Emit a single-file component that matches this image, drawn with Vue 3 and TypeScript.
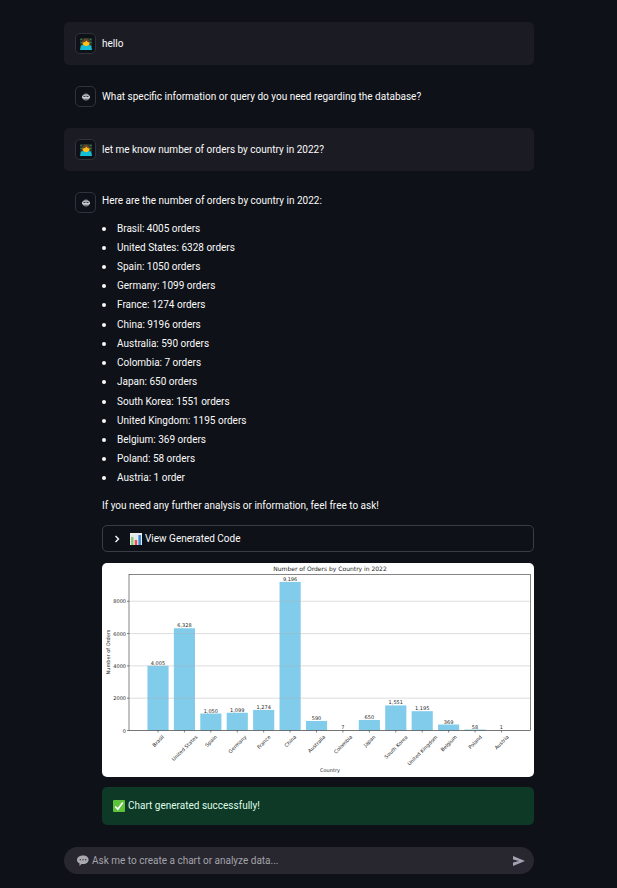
<script setup lang="ts">
import { ref } from 'vue'

interface Country {
  name: string
  orders: number
  /** Width of the name in em, used to hang the rotated label below the axis */
  em: number
}

const countries: Country[] = [
  { name: 'Brasil', orders: 4005, em: 2.79 },
  { name: 'United States', orders: 6328, em: 6.77 },
  { name: 'Spain', orders: 1050, em: 2.8 },
  { name: 'Germany', orders: 1099, em: 4.61 },
  { name: 'France', orders: 1274, em: 3.4 },
  { name: 'China', orders: 9196, em: 2.86 },
  { name: 'Australia', orders: 590, em: 4.42 },
  { name: 'Colombia', orders: 7, em: 4.7 },
  { name: 'Japan', orders: 650, em: 2.79 },
  { name: 'South Korea', orders: 1551, em: 6.13 },
  { name: 'United Kingdom', orders: 1195, em: 8.03 },
  { name: 'Belgium', orders: 369, em: 4.1 },
  { name: 'Poland', orders: 58, em: 3.38 },
  { name: 'Austria', orders: 1, em: 3.53 },
]

const plot = { left: 27, right: 428.5, top: 11.5, bottom: 167.5 }
const step = 26.42
const barWidth = step * 0.8
const scale = (plot.bottom - plot.top) / (9196 * 1.05)

const yOf = (value: number): number => plot.bottom - value * scale
const bars = countries.map((c, i) => {
  const x = 56 + i * step
  return {
    ...c,
    x,
    y: yOf(c.orders),
    height: c.orders * scale,
    label: c.orders.toLocaleString('en-US'),
    nameY: 171 + (c.em * 5.1 + 5) * 0.354,
  }
})
const ticks = [0, 2000, 4000, 6000, 8000]

const prompt = ref('')
</script>

<template>
  <main class="chat">
    <section class="message user">
      <span class="avatar">
        <svg viewBox="0 0 24 24" class="face" aria-hidden="true">
          <rect width="24" height="24" fill="#20382c" />
          <path d="M1 2h3v2H1zM20 2h3v2h-3zM1 8h3v2H1zM20 8h3v2h-3z" fill="#477b4b" />
          <path d="M4 15C1-4 23-4 20 15z" fill="#6b4228" />
          <path d="M5 9c3 0 6-1 8-4 1 2 3 4 6 4 1 11-14 11-14 0z" fill="#fcc21b" />
          <path d="M2 15l5-1c2 3 8 3 10 0l5 1 2 9H0z" fill="#13bfd6" />
        </svg>
      </span>
      <p>hello</p>
    </section>

    <section class="message">
      <span class="avatar">
        <svg viewBox="0 0 16 16" class="bot" aria-hidden="true">
          <ellipse cx="8" cy="8" rx="6.500" ry="7" fill="#8f9399" />
          <rect x="0" y="5" width="16" height="6" rx="2" fill="#c9ccd0" />
          <path d="M3 6h4v2H3zM9 6h4v2H9z" fill="#34373d" />
          <path d="M5 12h6v1H5z" fill="#45484e" />
        </svg>
      </span>
      <p>What specific information or query do you need regarding the database?</p>
    </section>

    <section class="message user">
      <span class="avatar">
        <svg viewBox="0 0 24 24" class="face" aria-hidden="true">
          <rect width="24" height="24" fill="#20382c" />
          <path d="M1 2h3v2H1zM20 2h3v2h-3zM1 8h3v2H1zM20 8h3v2h-3z" fill="#477b4b" />
          <path d="M4 15C1-4 23-4 20 15z" fill="#6b4228" />
          <path d="M5 9c3 0 6-1 8-4 1 2 3 4 6 4 1 11-14 11-14 0z" fill="#fcc21b" />
          <path d="M2 15l5-1c2 3 8 3 10 0l5 1 2 9H0z" fill="#13bfd6" />
        </svg>
      </span>
      <p>let me know number of orders by country in 2022?</p>
    </section>

    <section class="message answer">
      <span class="avatar">
        <svg viewBox="0 0 16 16" class="bot" aria-hidden="true">
          <ellipse cx="8" cy="8" rx="6.500" ry="7" fill="#8f9399" />
          <rect x="0" y="5" width="16" height="6" rx="2" fill="#c9ccd0" />
          <path d="M3 6h4v2H3zM9 6h4v2H9z" fill="#34373d" />
          <path d="M5 12h6v1H5z" fill="#45484e" />
        </svg>
      </span>
      <div class="body">
        <p>Here are the number of orders by country in 2022:</p>
        <ul>
          <li v-for="c in countries" :key="c.name">
            {{ c.name }}: {{ c.orders }} {{ c.orders === 1 ? 'order' : 'orders' }}
          </li>
        </ul>
        <p>If you need any further analysis or information, feel free to ask!</p>

        <button type="button" class="expander">
          <svg viewBox="0 0 8 8" class="chevron" aria-hidden="true">
            <path d="M2.500 1l3 3-3 3" fill="none" stroke="#fafafa" stroke-width="1.400" />
          </svg>
          <svg viewBox="0 0 12 12" class="emoji" aria-hidden="true">
            <rect width="12" height="12" fill="#eef1f3" />
            <path d="M0 3h12M0 6h12M0 9h12M3 0v12M6 0v12M9 0v12" stroke="#cfd6da" stroke-width=".4" />
            <rect x="1" y="4" width="2.500" height="8" fill="#8cc97a" />
            <rect x="4.700" y="7" width="2.500" height="5" fill="#ef4b4b" />
            <rect x="8.400" y="2" width="2.500" height="10" fill="#2f86dc" />
          </svg>
          <span>View Generated Code</span>
        </button>

        <svg class="chart" viewBox="0 0 432 214" role="img" aria-label="Number of Orders by Country in 2022">
          <rect width="432" height="214" fill="#fff" />
          <rect v-for="b in bars" :key="b.name" :x="b.x - barWidth / 2" :y="b.y" :width="barWidth" :height="b.height" fill="#81cceb" />
          <g stroke="#b0b0b0" stroke-opacity=".6" stroke-width=".7">
            <line v-for="t in ticks" :key="t" :x1="plot.left" :x2="plot.right" :y1="yOf(t)" :y2="yOf(t)" />
          </g>
          <rect :x="plot.left" :y="plot.top" :width="plot.right - plot.left" :height="plot.bottom - plot.top" fill="none" stroke="#333" stroke-width=".6" />
          <g stroke="#333" stroke-width=".6">
            <line v-for="t in ticks" :key="t" :x1="plot.left - 2" :x2="plot.left" :y1="yOf(t)" :y2="yOf(t)" />
            <line v-for="b in bars" :key="b.name" :x1="b.x" :x2="b.x" :y1="plot.bottom" :y2="plot.bottom + 2" />
          </g>
          <g class="tick" text-anchor="end">
            <text v-for="t in ticks" :key="t" :x="plot.left - 3" :y="yOf(t) + 2">{{ t }}</text>
          </g>
          <g class="tick" text-anchor="middle">
            <text v-for="b in bars" :key="b.name" :x="b.x" :y="b.y - 1">{{ b.label }}</text>
            <text v-for="b in bars" :key="b.name" :transform="`translate(${b.x} ${b.nameY}) rotate(-45)`" y="2">{{ b.name }}</text>
            <text x="228" y="209">Country</text>
            <text transform="translate(8 89) rotate(-90)">Number of Orders</text>
          </g>
          <text class="title" x="228" y="8" text-anchor="middle">Number of Orders by Country in 2022</text>
        </svg>

        <div class="success" role="status">
          <svg viewBox="0 0 12 12" class="emoji" aria-hidden="true">
            <rect width="12" height="12" rx="1" fill="#5fc23c" />
            <path d="M2.200 6.500l2.600 2.700 5-6.700" fill="none" stroke="#fff" stroke-width="1.700" />
          </svg>
          <span>Chart generated successfully!</span>
        </div>
      </div>
    </section>

    <form class="composer" @submit.prevent>
      <label for="prompt" class="bubble" aria-label="Message">
        <svg viewBox="0 0 12 12" class="emoji" aria-hidden="true">
          <path d="M6 .500c7.500 0 7.500 8.500 0 8.500l-1.500 0L2.500 11V8.300C-1.800 6.500-.5.500 6 .500z" fill="#a9a9af" />
          <circle cx="3.300" cy="4.800" r=".8" fill="#45434d" />
          <circle cx="6" cy="4.800" r=".8" fill="#45434d" />
          <circle cx="8.700" cy="4.800" r=".8" fill="#45434d" />
        </svg>
      </label>
      <input id="prompt" v-model="prompt" type="text" placeholder="Ask me to create a chart or analyze data..." />
      <button type="submit" aria-label="Send">
        <svg viewBox="0 0 12 10" aria-hidden="true">
          <path d="M0 0l12 5-12 5V6.500L6 5 0 3.500z" fill="#a3a1b2" />
        </svg>
      </button>
    </form>
  </main>
</template>

<style>
body {
  background: #0e1117;
}
</style>

<style scoped>
.chat {
  display: flex;
  flex-direction: column;
  gap: 10px;
  padding: 22px 83px 14px 64px;
  color: #fafafa;
  font: 10px/16px Roboto, "Noto Sans", sans-serif;
}
p {
  margin: 0;
}
.message {
  display: flex;
  align-items: center;
  gap: 6px;
  padding: 11px 0 11px 11px;
  border-radius: 5px;
}
.message.user {
  background: #1b1b23;
}
.message.answer {
  align-items: flex-start;
  padding-bottom: 0;
}
.avatar {
  display: flex;
  flex: none;
  align-items: center;
  justify-content: center;
  box-sizing: border-box;
  width: 21px;
  height: 21px;
  border: 1px solid #31333c;
  border-radius: 5px;
  background: #0e1117;
}
.face {
  width: 12px;
  height: 12px;
}
.bot {
  width: 8px;
  height: 8px;
}
.body {
  flex: 1;
  min-width: 0;
  padding-top: 1px;
}
ul {
  display: grid;
  min-height: 269px;
  margin: 0;
  padding: 10px 0;
  list-style: none;
}
li {
  display: flex;
  align-items: center;
  gap: 11px;
}
li::before {
  content: "";
  width: 4px;
  height: 4px;
  border-radius: 50%;
  background: #fafafa;
}
.expander {
  display: flex;
  align-items: center;
  box-sizing: border-box;
  width: 100%;
  height: 27px;
  margin: 11px 0;
  padding: 0 10px;
  border: 1px solid #3b3d45;
  border-radius: 5px;
  background: transparent;
  color: inherit;
  font: inherit;
}
.chevron {
  width: 8px;
  height: 8px;
  margin-right: 9px;
}
.emoji {
  flex: none;
  width: 12px;
  height: 12px;
  margin-right: 3px;
}
.chart {
  display: block;
  width: 100%;
  border-radius: 5px;
  font-family: "DejaVu Sans", sans-serif;
  fill: #262626;
}
.tick {
  font-size: 5px;
}
.title {
  font-size: 6px;
}
.success {
  display: flex;
  align-items: center;
  margin-top: 10px;
  padding: 11px;
  border-radius: 5px;
  background: #0d3926;
  color: #dffde9;
}
.composer {
  display: flex;
  align-items: center;
  height: 27px;
  margin-top: 12px;
  padding: 0 9px 0 13px;
  border-radius: 14px;
  background: #282730;
}
.bubble {
  display: flex;
}
.composer input {
  flex: 1;
  min-width: 0;
  padding: 0;
  border: 0;
  outline: 0;
  background: transparent;
  color: inherit;
  font: inherit;
}
.composer input::placeholder {
  color: #a3a3a9;
  opacity: 1;
}
.composer button {
  display: flex;
  padding: 0;
  border: 0;
  background: transparent;
}
.composer button svg {
  width: 12px;
  height: 10px;
}
</style>
